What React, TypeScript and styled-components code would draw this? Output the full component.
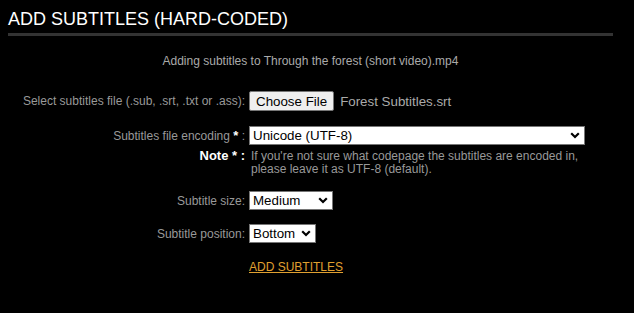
import React, { FC } from 'react';
import styled, { createGlobalStyle } from 'styled-components';

const GlobalStyle = createGlobalStyle`
  html, body {
    margin: 0;
    padding: 0;
    background: #000;
  }
  body {
    font-family: Arial, "Liberation Sans", sans-serif;
    color: #aaa;
  }
`;

const Page = styled.div`
  width: 605px;
  padding: 9px 0 20px 8px;
`;

const Heading = styled.h2`
  margin: 0;
  padding-bottom: 3px;
  border-bottom: 3px solid #333;
  font-size: 18px;
  line-height: 21px;
  font-weight: normal;
  color: #fff;
`;

const Intro = styled.p`
  margin: 18px 0 0;
  font-size: 12px;
  line-height: 14px;
  text-align: center;
  color: #aaa;
`;

const Form = styled.div`
  display: flex;
  flex-direction: column;
`;

const Row = styled.div<{ top: number; align?: 'center' | 'baseline' }>`
  display: flex;
  align-items: ${(p) => p.align || 'center'};
  margin-top: ${(p) => p.top}px;
`;

const Label = styled.label`
  width: 237px;
  padding-right: 4px;
  text-align: right;
  font-size: 12px;
  color: #999;
  white-space: nowrap;
`;

const Star = styled.b`
  color: #fff;
  font-size: 13px;
`;

const NoteLabel = styled(Label)`
  font-size: 13px;
  font-weight: bold;
  color: #fff;
  padding-right: 6px;
`;

const NoteText = styled.div`
  font-size: 12px;
  line-height: 13px;
  color: #999;
`;

const FileButton = styled.button`
  height: 20px;
  padding: 0 6px;
  font-family: Arial, "Liberation Sans", sans-serif;
  font-size: 13.33px;
  color: #000;
  background: #efefef;
  border: 1px solid #767676;
  border-radius: 2px;
`;

const FileName = styled.span`
  margin-left: 6px;
  font-size: 13.33px;
  color: #aaa;
`;

const SelectWrap = styled.div<{ width: number }>`
  position: relative;
  width: ${(p) => p.width}px;
  height: 19px;
`;

const Select = styled.select`
  appearance: none;
  width: 100%;
  height: 100%;
  margin: 0;
  padding: 0 0 0 3px;
  font-family: Arial, "Liberation Sans", sans-serif;
  font-size: 13.33px;
  color: #000;
  background: #fff;
  border: 1px solid #767676;
  border-radius: 0;
  outline: none;
`;

const Chevron = styled.svg`
  position: absolute;
  right: 5px;
  top: 6px;
  pointer-events: none;
`;

const SubmitLink = styled.a`
  font-size: 12px;
  color: #e0a030;
  text-decoration: underline;
  cursor: pointer;
`;

interface ISelectProps {
  width: number;
  value: string;
  options: string[];
}

const Dropdown: FC<ISelectProps> = ({ width, value, options }) => (
  <SelectWrap width={width}>
    <Select defaultValue={value}>
      {options.map((o) => <option key={o}>{o}</option>)}
    </Select>
    <Chevron width="10" height="7" viewBox="0 0 10 7">
      <path d="M1.2 1.2 L5 5 L8.8 1.2" fill="none" stroke="#000" strokeWidth="2.2" />
    </Chevron>
  </SelectWrap>
);

const App: FC = () => (
  <>
    <GlobalStyle />
    <Page>
      <Heading>ADD SUBTITLES (HARD-CODED)</Heading>
      <Intro>Adding subtitles to Through the forest (short video).mp4</Intro>
      <Form>
        <Row top={23}>
          <Label>Select subtitles file (.sub, .srt, .txt or .ass):</Label>
          <FileButton>Choose File</FileButton>
          <FileName>Forest Subtitles.srt</FileName>
        </Row>
        <Row top={15}>
          <Label>Subtitles file encoding <Star>*</Star> :</Label>
          <Dropdown width={336} value="Unicode (UTF-8)" options={['Unicode (UTF-8)', 'Western (Windows-1252)']} />
        </Row>
        <Row top={3} align="baseline">
          <NoteLabel>Note * :</NoteLabel>
          <NoteText>
            If you're not sure what codepage the subtitles are encoded in,
            <br />
            please leave it as UTF-8 (default).
          </NoteText>
        </Row>
        <Row top={15}>
          <Label>Subtitle size:</Label>
          <Dropdown width={84} value="Medium" options={['Small', 'Medium', 'Large']} />
        </Row>
        <Row top={14}>
          <Label>Subtitle position:</Label>
          <Dropdown width={67} value="Bottom" options={['Top', 'Bottom']} />
        </Row>
        <Row top={17}>
          <Label />
          <SubmitLink>ADD SUBTITLES</SubmitLink>
        </Row>
      </Form>
    </Page>
  </>
);

export default App;
